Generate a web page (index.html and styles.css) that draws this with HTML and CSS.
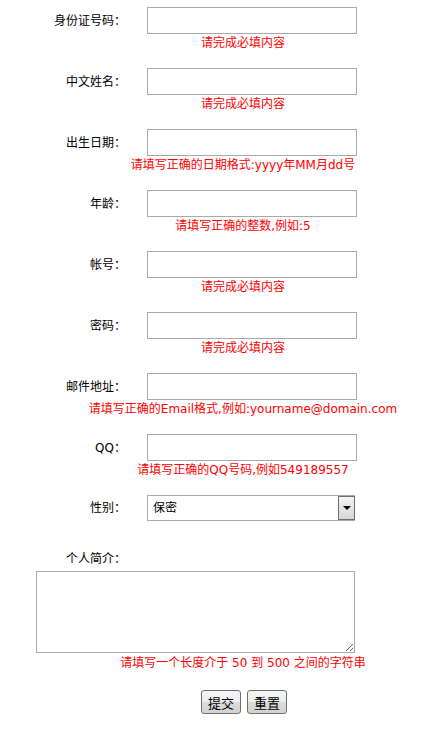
FILE: index.html
```html
<!DOCTYPE html>
<html lang="zh-CN">
<head>
  <meta charset="UTF-8">
  <meta name="viewport" content="width=device-width, initial-scale=1.0">
  <title>用户注册</title>
  <link rel="stylesheet" href="styles.css">
</head>
<body>
  <form class="reg-form" action="#" method="post">
    <!-- 文本输入项 -->
    <div class="field">
      <div class="row">
        <label class="label" for="idcard">身份证号码：</label>
        <input class="text" type="text" id="idcard">
      </div>
      <div class="tip">请完成必填内容</div>
    </div>

    <div class="field">
      <div class="row">
        <label class="label" for="cname">中文姓名：</label>
        <input class="text" type="text" id="cname">
      </div>
      <div class="tip">请完成必填内容</div>
    </div>

    <div class="field">
      <div class="row">
        <label class="label" for="birthday">出生日期：</label>
        <input class="text" type="text" id="birthday">
      </div>
      <div class="tip">请填写正确的日期格式:yyyy年MM月dd号</div>
    </div>

    <div class="field">
      <div class="row">
        <label class="label" for="age">年龄：</label>
        <input class="text" type="text" id="age">
      </div>
      <div class="tip">请填写正确的整数,例如:5</div>
    </div>

    <div class="field">
      <div class="row">
        <label class="label" for="account">帐号：</label>
        <input class="text" type="text" id="account">
      </div>
      <div class="tip">请完成必填内容</div>
    </div>

    <div class="field">
      <div class="row">
        <label class="label" for="pwd">密码：</label>
        <input class="text" type="password" id="pwd">
      </div>
      <div class="tip">请完成必填内容</div>
    </div>

    <div class="field">
      <div class="row">
        <label class="label" for="email">邮件地址：</label>
        <input class="text" type="text" id="email">
      </div>
      <div class="tip">请填写正确的Email格式,例如:yourname@domain.com</div>
    </div>

    <div class="field">
      <div class="row">
        <label class="label" for="qq">QQ：</label>
        <input class="text" type="text" id="qq">
      </div>
      <div class="tip">请填写正确的QQ号码,例如549189557</div>
    </div>

    <!-- 性别 -->
    <div class="row">
      <label class="label" for="sex">性别：</label>
      <div class="select-box">
        <select id="sex">
          <option>保密</option>
          <option>男</option>
          <option>女</option>
        </select>
        <span class="arrow"></span>
      </div>
    </div>

    <!-- 个人简介 -->
    <div class="intro">
      <label class="label" for="intro">个人简介：</label>
      <textarea id="intro"></textarea>
      <div class="tip tip-intro">请填写一个长度介于 50 到 500 之间的字符串</div>
    </div>

    <div class="actions">
      <button type="submit" class="btn">提交</button>
      <button type="reset" class="btn">重置</button>
    </div>
  </form>
</body>
</html>
```

FILE: styles.css
```css
body {
  margin: 0;
  font-family: "DejaVu Sans", "Noto Sans CJK SC", sans-serif;
  font-size: 12px;
  color: #000;
  background: #fff;
}

.reg-form {
  padding-top: 7px;
}

.field {
  margin-bottom: 17px;
}

.row {
  display: flex;
  align-items: center;
  gap: 21px;
}

.label {
  width: 126px;
  text-align: right;
  line-height: 16px;
}

.text {
  box-sizing: border-box;
  width: 210px;
  height: 27px;
  margin: 0;
  padding: 0 3px;
  border: 1px solid #a9a9a9;
  font: inherit;
}

.tip {
  margin-top: 1px;
  padding-left: 56px;
  line-height: 16px;
  text-align: center;
  color: #ff0000;
  white-space: nowrap;
}

/* 下拉框 */
.select-box {
  box-sizing: border-box;
  display: flex;
  width: 208px;
  height: 26px;
  border: 1px solid #a9a9a9;
  border-right: none;
}

.select-box select {
  flex: 1;
  appearance: none;
  -webkit-appearance: none;
  border: none;
  outline: none;
  background: #fff;
  padding: 0 0 0 5px;
  font: inherit;
  color: #000;
}

.arrow {
  box-sizing: border-box;
  width: 17px;
  height: 24px;
  border: 1px solid #6f6f6f;
  background: linear-gradient(#f4f4f4, #d6d6d6);
  display: flex;
  align-items: center;
  justify-content: center;
}

.arrow::after {
  content: "";
  border-left: 4px solid transparent;
  border-right: 4px solid transparent;
  border-top: 4px solid #000;
}

.intro {
  margin-top: 30px;
}

.intro .label {
  display: block;
}

.intro textarea {
  display: block;
  box-sizing: border-box;
  width: 319px;
  height: 82px;
  margin: 4px 0 0 36px;
  border: 1px solid #a9a9a9;
  font: inherit;
}

.tip-intro {
  margin-top: 2px;
}

.actions {
  margin-top: 19px;
  padding-left: 58px;
  display: flex;
  justify-content: center;
  gap: 6px;
}

.btn {
  box-sizing: border-box;
  height: 24px;
  padding: 0 6px;
  border: 1px solid #707070;
  border-radius: 3px;
  background: linear-gradient(#f6f6f6 0%, #ececec 50%, #dcdcdc 51%, #d2d2d2 100%);
  font-family: "Noto Sans CJK SC", sans-serif;
  font-size: 13px;
  color: #000;
}
```
